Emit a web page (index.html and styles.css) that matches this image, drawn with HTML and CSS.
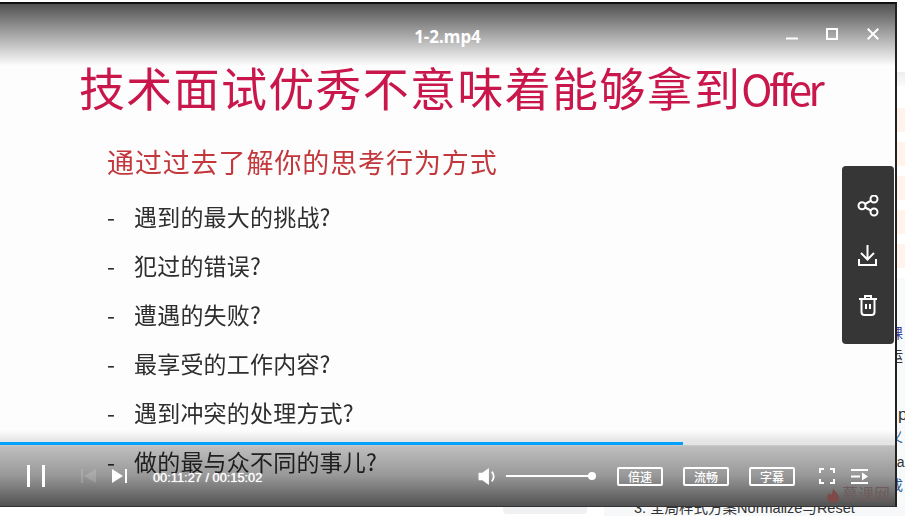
FILE: index.html
```html
<!DOCTYPE html>
<html lang="zh-CN">
<head>
    <meta charset="UTF-8">
    <meta name="viewport" content="width=device-width, initial-scale=1.0">
    <title>1-2.mp4</title>
    <link rel="stylesheet" href="styles.css">
</head>
<body>
    <div class="page">
        <!-- Player window -->
        <div class="player">
            <div class="slide">
                <h1>技术面试优秀不意味着能够拿到<span class="offer">Offer</span></h1>
                <h2>通过过去了解你的思考行为方式</h2>
                <ul class="points">
                    <li>遇到的最大的挑战?</li>
                    <li>犯过的错误?</li>
                    <li>遭遇的失败?</li>
                    <li>最享受的工作内容?</li>
                    <li>遇到冲突的处理方式?</li>
                    <li>做的最与众不同的事儿?</li>
                </ul>
            </div>

            <div class="titlebar">
                <div class="file-name">1-2.mp4</div>
                <div class="win-buttons">
                    <svg width="12" height="12" viewBox="0 0 12 12"><path d="M0 10.500h12" stroke="#fff" stroke-width="2"/></svg>
                    <svg width="12" height="12" viewBox="0 0 12 12"><rect x="1" y="1" width="10" height="10" fill="none" stroke="#fff" stroke-width="2"/></svg>
                    <svg class="win-close" width="12" height="12" viewBox="0 0 12 12"><path d="M.7.7l10.600 10.600M11.300 .7L.7 11.300" stroke="#fff" stroke-width="2"/></svg>
                </div>
            </div>

            <div class="side-tools">
                <svg width="22" height="22" viewBox="0 0 22 22" fill="none" stroke="#fff" stroke-width="2"><circle cx="5" cy="10.700" r="3.500"/><circle cx="17" cy="4" r="3.500"/><circle cx="17" cy="17" r="3.500"/><path d="M8 9l6-3.300M8 12.500l6 3"/></svg>
                <svg width="20" height="21" viewBox="0 0 20 21" fill="none" stroke="#fff" stroke-width="2"><path d="M9.500 0v14M3 8l6.500 6.500L16 8M1 14v6h17v-6"/></svg>
                <svg width="20" height="22" viewBox="0 0 20 22" fill="none" stroke="#fff" stroke-width="2"><path d="M1 5h18M7 5V2h6v3M3.500 5v13a3 3 0 0 0 3 3h7a3 3 0 0 0 3-3V5M8 10v5M12 10v5"/></svg>
            </div>

            <div class="controls">
                <div class="progress"><div class="progress-done"></div></div>
                <div class="control-row">
                    <svg class="pause" width="18" height="22" viewBox="0 0 18 22"><path d="M0 0h3v22H0zM15 0h3v22h-3z" fill="#fff"/></svg>
                    <svg class="prev" width="15" height="14" viewBox="0 0 15 14"><path d="M0 0h2v14H0zM15 0v14L3 7z" fill="#fff"/></svg>
                    <svg class="next" width="15" height="14" viewBox="0 0 15 14"><path d="M0 0l11 7-11 7zM13 0h2v14h-2z" fill="#fff"/></svg>
                    <span class="time">00:11:27 / 00:15:02</span>
                    <svg class="volume" width="19" height="17" viewBox="0 0 19 18"><path d="M0 5h4l7-5v18l-7-5H0z" fill="#fff"/><path d="M14 4a7 7 0 0 1 0 10" fill="none" stroke="#fff" stroke-width="2"/></svg>
                    <div class="volume-bar"><span class="volume-knob"></span></div>
                    <span class="pill pill-first">倍速</span>
                    <span class="pill">流畅</span>
                    <span class="pill">字幕</span>
                    <svg class="fullscreen" width="16" height="16" viewBox="0 0 16 16" fill="none" stroke="#fff" stroke-width="2"><path d="M1 5V1h4M11 1h4v4M15 11v4h-4M5 15H1v-4"/></svg>
                    <svg class="playlist" width="17" height="15" viewBox="0 0 17 15"><path d="M0 0h17v2H0zM0 13h17v2H0zM0 6.500h9v2H0zM11 3.500l6 4-6 4z" fill="#fff"/></svg>
                </div>
                <div class="watermark">
                    <svg width="12" height="17" viewBox="0 0 14 17"><path d="M7 0c1 4 7 6 7 11a7 6 0 0 1-14 0c0-3 2-4 3-6 0 2 1 3 2 3 1-2 2-5 2-8z" fill="#7d4a48"/></svg>
                    <span>慕课网</span>
                </div>
            </div>
        </div>

        <!-- Page behind the player -->
        <div class="behind">
            <div class="behind-head"></div>
            <div class="peach"></div>
            <div class="peach"></div>
            <div class="peach"></div>
            <div class="peach"></div>
            <div class="peach"></div>
            <div class="cut-text">
                <p class="line-a">课</p>
                <p class="line-b">运</p>
                <p class="line-c">p</p>
                <p class="line-d">义</p>
                <p class="line-e">pa</p>
                <p class="line-f">成</p>
            </div>
        </div>

        <div class="below">
            <div class="below-pill"></div>
            <div class="below-lesson">3. 全局样式方案Normalize与Reset</div>
        </div>
    </div>
</body>
</html>
```

FILE: styles.css
```css
* {
    box-sizing: border-box;
}

body {
    margin: 0;
    width: 905px;
    height: 516px;
    overflow: hidden;
    background-color: #fff;
    font-family: "Liberation Sans", "Noto Sans CJK SC", sans-serif;
}

.page {
    display: grid;
    grid-template-columns: 897px 8px;
    grid-template-rows: 507px 9px;
    height: 516px;
}

/* Player */
.player {
    position: relative;
    margin-top: 2px;
    height: 505px;
    border-top: 2px solid #111;
    border-right: 2px solid #222;
    border-bottom: 1px solid #333;
    background-color: #fdfdfd;
    overflow: hidden;
}

.slide {
    padding: 49px 0 0 79px;
    height: 100%;
    font-family: "Noto Sans CJK SC", sans-serif;
    filter: blur(0.5px);
}

.slide h1 {
    margin: 0;
    font-size: 46px;
    font-weight: 400;
    line-height: 66px;
    letter-spacing: 1.3px;
    color: #c9174c;
    white-space: nowrap;
}

.offer {
    font-size: 42px;
    letter-spacing: -3.500px;
}

.slide h2 {
    margin: 21px 0 0 28px;
    font-size: 27px;
    font-weight: 400;
    line-height: 40px;
    letter-spacing: 0.9px;
    color: #c2383c;
}

.points {
    list-style: none;
    margin: 10px 0 0 28px;
    padding: 0;
}

.points li {
    position: relative;
    padding-left: 27px;
    font-size: 23px;
    line-height: 49px;
    letter-spacing: 0.2px;
    color: #2e2e2e;
}

.points li::before {
    content: "-";
    position: absolute;
    left: 0;
}

/* Top bar */
.titlebar {
    position: absolute;
    top: 0;
    left: 0;
    right: 0;
    height: 62px;
    background: linear-gradient(rgba(0, 0, 0, 0.68), rgba(0, 0, 0, 0));
}

.file-name {
    padding-top: 22px;
    text-align: center;
    font-family: "Noto Sans", sans-serif;
    font-size: 17px;
    font-weight: 700;
    line-height: 22px;
    color: #fff;
}

.win-buttons {
    position: absolute;
    top: 24px;
    right: 16px;
    display: flex;
    gap: 28px;
}

.win-close {
    margin-left: 1px;
}

/* Side tools */
.side-tools {
    position: absolute;
    top: 162px;
    right: 1px;
    width: 52px;
    height: 178px;
    display: flex;
    flex-direction: column;
    align-items: center;
    gap: 28px;
    padding-top: 29px;
    background-color: #363636;
    border-radius: 4px;
}

/* Bottom controls */
.controls {
    position: absolute;
    left: 0;
    right: 0;
    bottom: 0;
    height: 76px;
    padding-top: 12px;
    background: linear-gradient(rgba(0, 0, 0, 0), rgba(0, 0, 0, 0.1) 16%, rgba(0, 0, 0, 0.25) 22%, rgba(0, 0, 0, 0.4) 60%, rgba(0, 0, 0, 0.68));
}

.progress {
    height: 3px;
    background-color: #e4e4e4;
}

.progress-done {
    width: 683px;
    height: 3px;
    background-color: #00a0ff;
}

.control-row {
    display: flex;
    align-items: center;
    height: 22px;
    margin-top: 20px;
    padding-left: 27px;
}

.prev {
    margin-left: 36px;
    opacity: 0.15;
}

.next {
    margin-left: 16px;
}

.time {
    position: relative;
    top: 1px;
    width: 109px;
    margin-left: 26px;
    font-size: 12.800px;
    color: #fff;
    text-shadow: 0 0 1px #fff;
    white-space: nowrap;
}

.volume {
    margin-left: 216px;
}

.volume-bar {
    position: relative;
    width: 86px;
    height: 2px;
    margin-left: 9px;
    background-color: #fff;
}

.volume-knob {
    position: absolute;
    top: -3px;
    right: -4px;
    width: 8px;
    height: 8px;
    border-radius: 50%;
    background-color: #fff;
}

.pill {
    width: 46px;
    height: 19px;
    margin-left: 20px;
    border: 2px solid #fff;
    border-radius: 2px;
    font-family: "Noto Sans CJK SC", sans-serif;
    font-size: 12px;
    font-weight: 500;
    line-height: 15px;
    text-align: center;
    color: #fff;
}

.pill-first {
    margin-left: 25px;
}

.fullscreen {
    margin-left: 24px;
}

.playlist {
    margin-left: 16px;
}

.watermark {
    position: absolute;
    right: 5px;
    bottom: 1px;
    display: flex;
    align-items: center;
    gap: 3px;
    font-size: 16px;
    line-height: 20px;
    color: #6f5c5c;
}

/* Page behind the player */
.behind {
    padding-top: 72px;
    background-color: #fff;
    overflow: hidden;
}

.behind-head {
    height: 14px;
    margin-bottom: 22px;
    background: linear-gradient(#eee, #fafafa);
}

.peach {
    height: 24px;
    margin-bottom: 10px;
    background-color: #fff3ec;
}

.cut-text {
    height: 229px;
    padding-top: 45px;
    background-color: #f8f9fb;
    font-size: 14px;
    line-height: 20px;
    color: #333;
}

.cut-text p {
    margin: 0 0 0 -8px;
}

.line-a {
    color: #3a3f99;
}

.cut-text .line-b {
    margin-top: 3px;
}

.cut-text .line-c {
    margin: 39px 0 0 1px;
    font-size: 17px;
}

.cut-text .line-d {
    margin-top: 2px;
    color: #2a5a96;
}

.cut-text .line-e {
    margin-top: 5px;
}

.cut-text .line-f {
    margin-top: 3px;
    color: #2a5a96;
}

.below {
    grid-column: 1 / 3;
    display: flex;
    overflow: hidden;
}

.below-pill {
    width: 84px;
    height: 7px;
    margin-left: 503px;
    background-color: #f0f1f3;
    border-radius: 0 0 4px 4px;
}

.below-lesson {
    flex: 1;
    margin-left: 17px;
    margin-top: -9px;
    padding-left: 30px;
    height: 20px;
    background-color: #f7f8fa;
    font-size: 14.500px;
    line-height: 20px;
    color: #333;
    white-space: nowrap;
}
```
